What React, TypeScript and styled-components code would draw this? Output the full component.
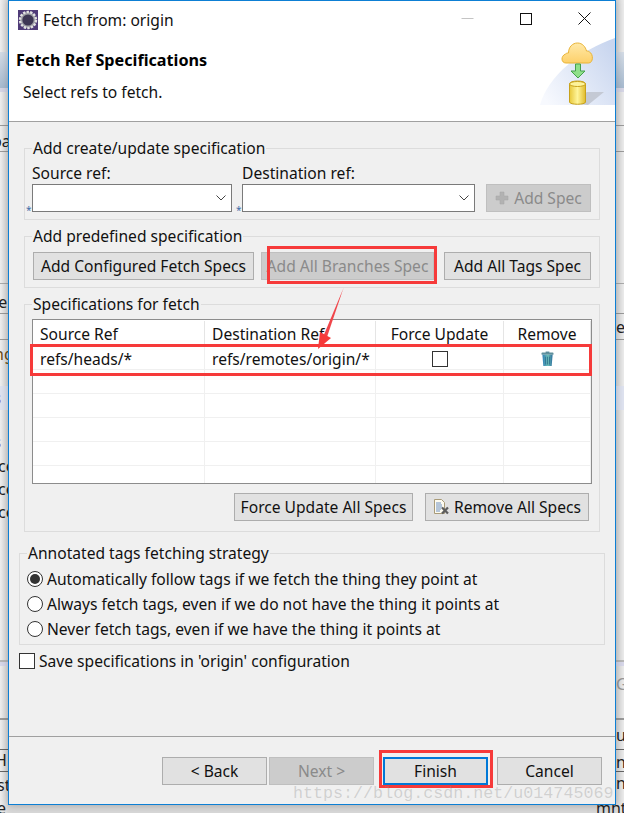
import React from "react";
import styled, { createGlobalStyle } from "styled-components";

const GlobalStyle = createGlobalStyle`
  html, body {
    margin: 0;
    padding: 0;
    background: #e2e2e2;
  }
  * {
    box-sizing: border-box;
  }
`;

const FONT = `"Noto Sans", "Open Sans", sans-serif`;

const Screen = styled.div`
  position: relative;
  width: 624px;
  height: 813px;
  overflow: hidden;
  padding: 0 8px 8px 8px;
  font-family: ${FONT};
  font-size: 15.6px;
  line-height: 20px;
  color: #111;
  background: linear-gradient(90deg, #efefef 0, #d8d8d8 8px, #d8d8d8 616px, #ececec 624px);
`;

const Backdrop = styled.div`
  position: absolute;
  inset: 0;
`;

const BackBand = styled.div<{ $y: number; $h: number; $c: string }>`
  position: absolute;
  left: 0;
  right: 0;
  top: ${(p) => p.$y}px;
  height: ${(p) => p.$h}px;
  background: ${(p) => p.$c};
`;

const BackText = styled.span<{ $x: number; $y: number; $c?: string; $b?: boolean }>`
  position: absolute;
  left: ${(p) => p.$x}px;
  top: ${(p) => p.$y}px;
  color: ${(p) => p.$c || "#222"};
  font-weight: ${(p) => (p.$b ? 700 : 400)};
  font-size: 16px;
  line-height: 20px;
`;

const Dialog = styled.div`
  position: relative;
  width: 608px;
  height: 805px;
  display: flex;
  flex-direction: column;
  background: #f0f0f0;
  border: 1px solid #0d7fd4;
  box-shadow: 0 0 8px rgba(0, 0, 0, 0.25);
`;

const TitleBar = styled.div`
  height: 37px;
  flex: none;
  display: flex;
  align-items: center;
  padding: 0 24px 0 9px;
  background: #fff;
`;

const WindowTitle = styled.div`
  margin-left: 5px;
  flex: 1;
`;

const WindowControls = styled.div`
  display: flex;
  align-items: center;
  gap: 46px;
  margin-bottom: 2px;
`;

const WizardHeader = styled.div`
  height: 84px;
  flex: none;
  display: flex;
  justify-content: space-between;
  background: #fff;
  border-bottom: 1px solid #a0a0a0;
`;

const HeaderText = styled.div`
  display: flex;
  flex-direction: column;
  padding-left: 7px;
`;

const WizardTitle = styled.div`
  margin-top: 12px;
  font-size: 16.2px;
  font-weight: 700;
  color: #000;
`;

const WizardMessage = styled.div`
  margin-top: 12px;
  margin-left: 7px;
`;

const Banner = styled.svg`
  display: block;
  flex: none;
`;

const Content = styled.div`
  flex: 1;
  min-height: 0;
  padding: 16px 10px 0 10px;
`;

const Inset = styled.div`
  display: flex;
  flex-direction: column;
  gap: 6px;
  margin: 0 5px 11px 5px;
`;

const Group = styled.fieldset`
  margin: 0;
  min-width: 0;
  padding: 0 7px;
  border: 1px solid #dcdcdc;
`;

const GroupLabel = styled.legend`
  padding: 0 1px;
  line-height: 21px;
`;

const FormRow = styled.div`
  display: flex;
  align-items: flex-end;
  padding: 4px 0 7px;
`;

const Field = styled.div<{ $w: number; $mr: number }>`
  width: ${(p) => p.$w}px;
  margin-right: ${(p) => p.$mr}px;
  flex: none;
`;

const FieldLabel = styled.div`
  height: 21px;
`;

const Combo = styled.div`
  position: relative;
  height: 28px;
  display: flex;
  align-items: center;
  justify-content: flex-end;
  padding-right: 5px;
  background: #fff;
  border: 1px solid #7a7a7a;
`;

const RequiredMark = styled.span`
  position: absolute;
  left: -7px;
  bottom: -4px;
  color: #3f6da8;
  font-size: 10px;
  line-height: 10px;
`;

const ButtonRow = styled.div<{ $pad: string; $gap: number; $end?: boolean }>`
  display: flex;
  gap: ${(p) => p.$gap}px;
  padding: ${(p) => p.$pad};
  justify-content: ${(p) => (p.$end ? "flex-end" : "flex-start")};
`;

const Button = styled.button<{ $w: number; $focused?: boolean; $ml?: number }>`
  width: ${(p) => p.$w}px;
  height: 28px;
  flex: none;
  display: flex;
  align-items: center;
  justify-content: center;
  gap: 5px;
  margin: 0 0 0 ${(p) => p.$ml || 0}px;
  padding: 0;
  font-family: ${FONT};
  font-size: 15.6px;
  line-height: 20px;
  white-space: nowrap;
  color: #111;
  background: #e1e1e1;
  border: ${(p) => (p.$focused ? "2px solid #0078d7" : "1px solid #adadad")};
  &:disabled {
    color: #8a8a8a;
    background: #cccccc;
    border-color: #bfbfbf;
  }
`;

const Table = styled.div`
  height: 165px;
  margin-top: 4px;
  overflow: hidden;
  background: #fff;
  border: 1px solid #8c8c8c;
`;

const columns = "172px 171px 128px 87px";

const HeaderRow = styled.div`
  display: grid;
  grid-template-columns: ${columns};
  height: 26px;
  padding-top: 1px;
`;

const HeaderCell = styled.div<{ $center?: boolean }>`
  padding: 3px 7px 0;
  text-align: ${(p) => (p.$center ? "center" : "left")};
  border-right: 1px solid #e5e5e5;
  white-space: nowrap;
`;

const BodyRow = styled.div`
  display: grid;
  grid-template-columns: ${columns};
  height: 24px;
  border-bottom: 1px solid #f0f0f0;
`;

const BodyCell = styled.div<{ $center?: boolean }>`
  display: flex;
  align-items: center;
  justify-content: ${(p) => (p.$center ? "center" : "flex-start")};
  padding: 2px 7px 0;
  border-right: 1px solid #f0f0f0;
  white-space: nowrap;
`;

const CheckBox = styled.span`
  display: block;
  width: 16px;
  height: 16px;
  flex: none;
  background: #fff;
  border: 1px solid #333;
`;

const RadioRow = styled.div`
  display: flex;
  align-items: center;
  gap: 4px;
  height: 25px;
`;

const Radio = styled.span<{ $on?: boolean }>`
  width: 16px;
  height: 16px;
  flex: none;
  display: flex;
  align-items: center;
  justify-content: center;
  background: #fff;
  border: 1px solid #333;
  border-radius: 50%;
  &::after {
    content: "";
    display: ${(p) => (p.$on ? "block" : "none")};
    width: 10px;
    height: 10px;
    border-radius: 50%;
    background: #333;
  }
`;

const RadioList = styled.div`
  padding: 2px 0 3px;
`;

const SaveRow = styled.div`
  display: flex;
  align-items: center;
  gap: 4px;
  height: 16px;
  margin-top: 8px;
`;

const Footer = styled.div`
  height: 68px;
  flex: none;
  display: flex;
  justify-content: flex-end;
  align-items: flex-start;
  padding: 20px 13px 0 0;
  border-top: 1px solid #a0a0a0;
`;

const BackGroup = styled.div`
  display: flex;
  gap: 2px;
  margin-right: 9px;
`;

const FinishWrap = styled.div`
  margin-right: 9px;
`;

const Highlight = styled.div<{ $x: number; $y: number; $w: number; $h: number }>`
  position: absolute;
  left: ${(p) => p.$x}px;
  top: ${(p) => p.$y}px;
  width: ${(p) => p.$w}px;
  height: ${(p) => p.$h}px;
  border: 3px solid #f63a3a;
  pointer-events: none;
`;

const ArrowMark = styled.svg`
  position: absolute;
  left: 310px;
  top: 285px;
  pointer-events: none;
`;

const Watermark = styled.div`
  position: absolute;
  left: 293px;
  top: 784px;
  font-family: "Liberation Mono", monospace;
  font-size: 16.7px;
  line-height: 20px;
  color: rgba(140, 140, 140, 0.32);
  white-space: nowrap;
  pointer-events: none;
`;

const backBands = [
  { y: 52, h: 36, c: "linear-gradient(180deg,#d4dce6,#a8bbd0)" },
  { y: 88, h: 4, c: "#d6d6e6" },
  { y: 125, h: 1, c: "#9a9a9a" },
  { y: 151, h: 1, c: "#9a9a9a" },
  { y: 283, h: 1, c: "#aaa" },
  { y: 313, h: 1, c: "#999" },
  { y: 339, h: 1, c: "#999" },
  { y: 386, h: 24, c: "#dfe3f0" },
  { y: 660, h: 2, c: "#b8b8b8" },
  { y: 662, h: 4, c: "#d8d8ea" },
  { y: 718, h: 2, c: "#9a9a9a" },
  { y: 749, h: 1, c: "#666" },
  { y: 771, h: 1, c: "#666" },
];

const backTexts = [
  { x: -8, y: 131, t: "pa" },
  { x: -8, y: 292, t: "re" },
  { x: -6, y: 344, t: "ng", c: "#6b4a10" },
  { x: -7, y: 388, t: "s", c: "#7a1f6e", b: true },
  { x: -7, y: 432, t: "s", c: "#7a1f6e", b: true },
  { x: -2, y: 456, t: "ce" },
  { x: -2, y: 479, t: "ce" },
  { x: -2, y: 502, t: "ce" },
  { x: -5, y: 750, t: "H" },
  { x: -3, y: 775, t: "st" },
  { x: -3, y: 798, t: "e" },
  { x: 616, y: 317, t: "e" },
  { x: 616, y: 674, t: "G", c: "#999" },
  { x: 616, y: 725, t: "ut" },
  { x: 616, y: 752, t: "nt" },
  { x: 616, y: 773, t: "nt" },
  { x: 596, y: 798, t: "mht" },
];

const blankRows = [0, 1, 2, 3, 4];

function EclipseIcon() {
  return (
    <svg width="20" height="20" viewBox="0 0 20 20">
      <rect width="20" height="20" fill="#4f3b78" />
      <circle cx="10" cy="10" r="8" fill="#9a9aa2" />
      <circle cx="10" cy="10" r="8" fill="none" stroke="#e2e2e2" strokeWidth="2.4" strokeDasharray="2.4 1.2" />
      <circle cx="10" cy="10" r="5.6" fill="#3d3654" />
    </svg>
  );
}

function MinimizeIcon() {
  return (
    <svg width="13" height="13" viewBox="0 0 13 13">
      <path d="M0.5 6.5h12" stroke="#c4c4c4" strokeWidth="1" />
    </svg>
  );
}

function MaximizeIcon() {
  return (
    <svg width="12" height="12" viewBox="0 0 12 12">
      <rect x="0.5" y="0.5" width="11" height="11" fill="none" stroke="#111" />
    </svg>
  );
}

function CloseIcon() {
  return (
    <svg width="13" height="13" viewBox="0 0 13 13">
      <path d="M0.5 0.5l12 12M12.5 0.5l-12 12" stroke="#111" strokeWidth="1" />
    </svg>
  );
}

function ChevronIcon() {
  return (
    <svg width="10" height="6" viewBox="0 0 10 6">
      <path d="M0.5 0.5L5 5l4.5-4.5" fill="none" stroke="#444" />
    </svg>
  );
}

function PlusIcon() {
  return (
    <svg width="14" height="14" viewBox="0 0 14 14">
      <path d="M5 1h4v4h4v4H9v4H5V9H1V5h4z" fill="#b2b2b2" stroke="#a5a5a5" strokeWidth="0.5" />
    </svg>
  );
}

function TrashIcon() {
  return (
    <svg width="13" height="16" viewBox="0 0 14 16">
      <defs>
        <linearGradient id="trash" x1="0" x2="1" y1="0" y2="0">
          <stop offset="0" stopColor="#2f7fb5" />
          <stop offset="0.55" stopColor="#6fc0b8" />
          <stop offset="1" stopColor="#2a6d9c" />
        </linearGradient>
      </defs>
      <path d="M5 0h4v1.500H5z" fill="#4a7f93" />
      <rect x="0.5" y="1" width="13" height="2.500" rx="1" fill="#5f8f9c" />
      <path d="M1.500 3.500h11l-1 12h-9z" fill="url(#trash)" />
      <path d="M4.700 5.500l.3 8.500M7 5.500V14M9.300 5.500L9 14" stroke="#1f5e80" strokeWidth="0.7" />
    </svg>
  );
}

function RemoveAllIcon() {
  return (
    <svg width="16" height="16" viewBox="0 0 16 16">
      <path d="M1.500 0.500h7l3 3v11h-10z" fill="#fdfbf0" stroke="#a89a78" />
      <path d="M3 4h5M3 6h6M3 8h6M3 10h5M3 12h4" stroke="#6d8fc0" />
      <path d="M9 8.500l6 6M15 8.500l-6 6" stroke="#5d5d5d" strokeWidth="2.2" />
    </svg>
  );
}

function FetchBanner() {
  return (
    <Banner width="75" height="67" viewBox="0 0 75 67">
      <defs>
        <linearGradient id="sky" x1="0" x2="1" y1="0.8" y2="0.2">
          <stop offset="0" stopColor="#f7f9fe" />
          <stop offset="1" stopColor="#c9d6ef" />
        </linearGradient>
        <linearGradient id="cloud" x1="0" x2="0" y1="0" y2="1">
          <stop offset="0" stopColor="#ffe9a8" />
          <stop offset="1" stopColor="#fdd06a" />
        </linearGradient>
        <linearGradient id="can" x1="0" x2="1" y1="0" y2="0">
          <stop offset="0" stopColor="#e8c83a" />
          <stop offset="0.5" stopColor="#fff59a" />
          <stop offset="1" stopColor="#e0bb2c" />
        </linearGradient>
      </defs>
      <path d="M0 67C8 38 40 12 75 0v67z" fill="url(#sky)" />
      <path d="M30 65L47 54h17L48 67z" fill="#c4c9d4" />
      <path
        d="M26 25c-5 0-5.500-7-0.500-9 1-1 2-1 3-1 0-6 4-10 9-10 5 0 8 4 9 8 1 0 2 0 3 1 4 2 4 11-1 11z"
        fill="url(#cloud)"
        stroke="#e9b437"
      />
      <path d="M35.500 26h5v7h4.500l-7 7-7-7h4.500z" fill="#8fe08a" stroke="#44a04c" />
      <path d="M29.500 46c0-4 16-4 16 0v18c0 3-16 3-16 0z" fill="url(#can)" stroke="#c8a21c" />
      <ellipse cx="37.500" cy="46" rx="8" ry="2.500" fill="#fdf39a" stroke="#c8a21c" />
    </Banner>
  );
}

export default function App() {
  return (
    <Screen>
      <GlobalStyle />
      <Backdrop>
        {backBands.map((b) => (
          <BackBand key={b.y} $y={b.y} $h={b.h} $c={b.c} />
        ))}
        {backTexts.map((t) => (
          <BackText key={`${t.x}-${t.y}`} $x={t.x} $y={t.y} $c={t.c} $b={t.b}>
            {t.t}
          </BackText>
        ))}
      </Backdrop>

      <Dialog>
        <TitleBar>
          <EclipseIcon />
          <WindowTitle>Fetch from: origin</WindowTitle>
          <WindowControls>
            <MinimizeIcon />
            <MaximizeIcon />
            <CloseIcon />
          </WindowControls>
        </TitleBar>

        <WizardHeader>
          <HeaderText>
            <WizardTitle>Fetch Ref Specifications</WizardTitle>
            <WizardMessage>Select refs to fetch.</WizardMessage>
          </HeaderText>
          <FetchBanner />
        </WizardHeader>

        <Content>
          <Inset>
            <Group>
              <GroupLabel>Add create/update specification</GroupLabel>
              <FormRow>
                <Field $w={200} $mr={10}>
                  <FieldLabel>Source ref:</FieldLabel>
                  <Combo>
                    <RequiredMark>*</RequiredMark>
                    <ChevronIcon />
                  </Combo>
                </Field>
                <Field $w={233} $mr={11}>
                  <FieldLabel>Destination ref:</FieldLabel>
                  <Combo>
                    <RequiredMark>*</RequiredMark>
                    <ChevronIcon />
                  </Combo>
                </Field>
                <Button $w={105} disabled>
                  <PlusIcon />
                  Add Spec
                </Button>
              </FormRow>
            </Group>

            <Group>
              <GroupLabel>Add predefined specification</GroupLabel>
              <ButtonRow $pad="5px 0 7px 1px" $gap={7}>
                <Button $w={221}>Add Configured Fetch Specs</Button>
                <Button $w={173} disabled>
                  Add All Branches Spec
                </Button>
                <Button $w={147} $ml={3}>
                  Add All Tags Spec
                </Button>
              </ButtonRow>
            </Group>

            <Group>
              <GroupLabel>Specifications for fetch</GroupLabel>
              <Table>
                <HeaderRow>
                  <HeaderCell>Source Ref</HeaderCell>
                  <HeaderCell>Destination Ref</HeaderCell>
                  <HeaderCell $center>Force Update</HeaderCell>
                  <HeaderCell $center>Remove</HeaderCell>
                </HeaderRow>
                <BodyRow>
                  <BodyCell>refs/heads/*</BodyCell>
                  <BodyCell>refs/remotes/origin/*</BodyCell>
                  <BodyCell $center>
                    <CheckBox />
                  </BodyCell>
                  <BodyCell $center>
                    <TrashIcon />
                  </BodyCell>
                </BodyRow>
                {blankRows.map((r) => (
                  <BodyRow key={r}>
                    <BodyCell />
                    <BodyCell />
                    <BodyCell />
                    <BodyCell />
                  </BodyRow>
                ))}
              </Table>
              <ButtonRow $pad="9px 3px 10px 0" $gap={12} $end>
                <Button $w={179}>Force Update All Specs</Button>
                <Button $w={164}>
                  <RemoveAllIcon />
                  Remove All Specs
                </Button>
              </ButtonRow>
            </Group>
          </Inset>

          <Group>
            <GroupLabel>Annotated tags fetching strategy</GroupLabel>
            <RadioList>
              <RadioRow>
                <Radio $on />
                Automatically follow tags if we fetch the thing they point at
              </RadioRow>
              <RadioRow>
                <Radio />
                Always fetch tags, even if we do not have the thing it points at
              </RadioRow>
              <RadioRow>
                <Radio />
                Never fetch tags, even if we have the thing it points at
              </RadioRow>
            </RadioList>
          </Group>

          <SaveRow>
            <CheckBox />
            Save specifications in 'origin' configuration
          </SaveRow>
        </Content>

        <Footer>
          <BackGroup>
            <Button $w={105}>&lt; Back</Button>
            <Button $w={105} disabled>
              Next &gt;
            </Button>
          </BackGroup>
          <FinishWrap>
            <Button $w={105} $focused>
              Finish
            </Button>
          </FinishWrap>
          <Button $w={105}>Cancel</Button>
        </Footer>
      </Dialog>

      <Highlight $x={267} $y={246} $w={170} $h={38} />
      <Highlight $x={30} $y={344} $w={562} $h={32} />
      <Highlight $x={379} $y={750} $w={114} $h={38} />
      <ArrowMark width="40" height="70" viewBox="0 0 40 70">
        <path d="M33.500 3L13 52l3.500 1.500z" fill="#f0454a" />
        <path d="M8 64l2-17 11 6z" fill="#f63a3a" />
      </ArrowMark>
      <Watermark>https://blog.csdn.net/u014745069</Watermark>
    </Screen>
  );
}
